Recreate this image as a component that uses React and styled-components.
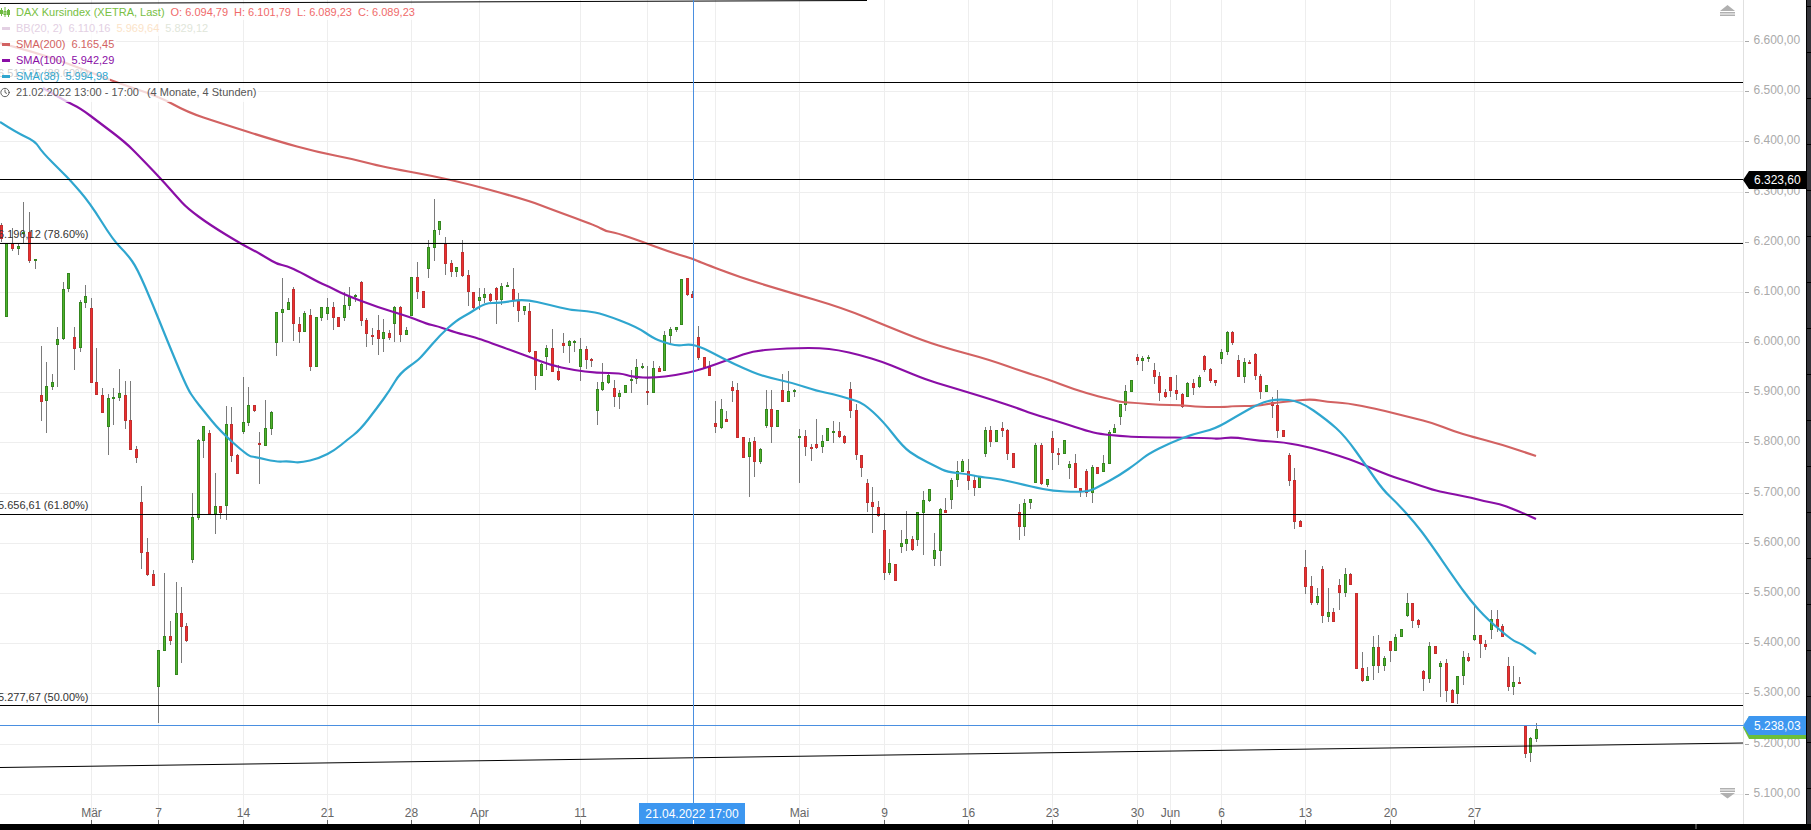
import styled, { createGlobalStyle } from 'styled-components';
import { Clock } from 'lucide-react';

const GlobalStyle = createGlobalStyle`
    html, body {
        margin: 0;
        height: 100%;
        background: #fff;
        overflow: hidden;
        font-family: "Liberation Sans", Arial, sans-serif;
    }
`;

const Page = styled.div`
    width: 1811px;
    height: 830px;
    display: flex;
    flex-direction: column;
    background: #000;
`;
const ChartRow = styled.div`
    display: flex;
    flex: 1;
    min-height: 0;
`;
const ChartArea = styled.div`
    position: relative;
    flex: 1;
    background: #fff;
    overflow: hidden;
`;
const RightRail = styled.div`
    width: 4px;
    border-left: 1px solid #000;
    background: linear-gradient(to bottom, #333338 0, #333338 45px, #000 45px, #000 46px) 0 7px / 100% 46px;
`;
const BottomBar = styled.div`
    display: flex;
    height: 6px;
    padding-left: 1695px;
    background: #000;
`;
const BarNotch = styled.span`
    width: 2px;
    height: 5px;
    background: #444;
`;
const Plot = styled.svg`
    display: block;
    font-family: "Liberation Sans", Arial, sans-serif;
`;

const Legend = styled.div`
    position: absolute;
    top: 4px;
    left: 0;
    display: flex;
    flex-direction: column;
    align-items: flex-start;
    font-size: 11px;
    line-height: 13px;
`;
const LegendRow = styled.div`
    display: flex;
    align-items: center;
    box-sizing: border-box;
    height: 16px;
    column-gap: 6px;
    padding-right: 2px;
    white-space: nowrap;
    color: ${p => p.$color};
    background: rgba(255, 255, 255, 0.75);
`;
/* stops short of the fib line at 6.517 so the line stays solid black */
const ClippedRow = styled(LegendRow)`
    height: 14px;
    padding-top: 2px;
`;
const TimeRow = styled(LegendRow)`
    height: 19px;
    margin-top: 1px;
    column-gap: 8px;
`;
const Marker = styled.span`
    width: 8px;
    height: 3px;
    margin-left: 2px;
    margin-right: 0;
    background: ${p => p.$color};
`;
const IconSlot = styled.span`
    display: flex;
    width: 10px;
`;
const ClockSlot = styled(IconSlot)`
    margin-right: -2px;
`;
const Value = styled.span`
    color: ${p => p.$color || 'inherit'};
`;
const Ohlc = styled.span`
    display: flex;
    column-gap: 6px;
    color: #f06a6a;
`;
const PriceTag = styled.div`
    position: absolute;
    right: 0;
    top: ${p => p.$top}px;
    width: 63px;
    height: ${p => p.$height}px;
    padding-left: 11px;
    box-sizing: border-box;
    display: flex;
    align-items: center;
    font-size: 12px;
    color: #fff;
    background: ${p => p.$bg};
    clip-path: polygon(6px 0, 100% 0, 100% 100%, 6px 100%, 0 50%);
`;
const TimeBox = styled.div`
    position: absolute;
    left: 639px;
    bottom: 0;
    width: 106px;
    height: 21px;
    display: flex;
    align-items: center;
    justify-content: center;
    font-size: 12px;
    color: #fff;
    background: #3d97f0;
    &::after {
        content: '';
        position: absolute;
        left: 54px;
        bottom: 0;
        width: 1px;
        height: 4px;
        background: #fff;
    }
`;

const AXIS_X = 1743.5;
const PLOT_H = 824;

const gridY = [41, 91, 141, 192, 242, 292, 342, 392, 442, 493, 543, 593, 643, 693, 744, 794];
const priceLabels = ['6.600,00', '6.500,00', '6.400,00', '6.300,00', '6.200,00', '6.100,00', '6.000,00', '5.900,00',
    '5.800,00', '5.700,00', '5.600,00', '5.500,00', '5.400,00', '5.300,00', '5.200,00', '5.100,00'];

const timeTicks = [
    [91, 'Mär'], [158, '7'], [243, '14'], [327, '21'], [411, '28'], [479, 'Apr'], [580, '11'], [647, ''], [715, ''],
    [799, 'Mai'], [884, '9'], [968, '16'], [1052, '23'], [1137, '30'], [1170, 'Jun'], [1221, '6'], [1305, '13'],
    [1390, '20'], [1474, '27'],
];

const fibLevels = [[82, '6.517,25 (88.60%)', 77], [179, '', 0], [243, '6.196,12 (78.60%)', 238], [514, '5.656,61 (61.80%)', 509], [705, '5.277,67 (50.00%)', 701]];

const sma200 = '0,43 35,52 80,68 115,82 160,97 187,112 220,123 277,141 317,152 353,159 383,167 450,179 527,200 553,210 597,226 605,231 617,233 643,242 667,251 693,259 700,262 739,277 785,291 843,308 889,327 924,341 953,350 987,359 1027,373 1047,379 1073,389 1100,397 1110,399 1120,402 1137,403 1160,405 1180,405 1200,407 1227,407 1233,406 1257,406 1273,403 1293,401 1312,399 1327,402 1347,403 1377,409 1393,413 1413,418 1433,423 1453,431 1473,437 1500,444 1536,456';
const sma100 = '43,88 67,102 80,108 100,123 125,142 140,157 162,180 177,197 187,208 210,225 243,245 255,251 267,258 277,264 287,266 300,272 320,283 330,287 343,294 377,307 410,317 427,324 437,326 457,333 470,336 480,339 527,356 550,365 573,370 597,373 620,373 633,377 653,378 677,375 700,370 733,358 753,351 777,349 797,348 820,348 838,350 860,355 883,362 900,369 927,380 947,386 967,392 993,400 1020,409 1030,413 1063,423 1087,431 1100,434 1120,436 1137,437 1213,438 1217,439 1233,437 1260,441 1283,442 1313,448 1340,456 1357,462 1390,476 1410,482 1433,490 1447,493 1473,498 1483,501 1500,504 1513,509 1525,514 1536,519';
const sma38 = '0,122 17,133 35,141 42,152 62,172 70,180 90,203 113,240 127,254 137,268 153,305 167,340 187,388 195,400 203,410 220,431 248,456 255,457 277,462 288,461 300,463 320,458 335,450 347,440 360,430 377,408 390,390 400,373 417,361 423,355 440,335 457,320 470,313 485,303 500,303 524,299 550,305 570,310 587,311 603,314 637,327 653,338 663,342 677,346 690,344 700,347 707,350 728,361 743,368 762,376 793,383 817,391 833,394 850,399 863,403 883,421 903,447 917,457 937,467 947,472 967,474 980,477 1000,479 1033,487 1053,491 1077,492 1090,491 1100,486 1120,475 1137,463 1148,454 1170,443 1193,434 1215,429 1237,416 1260,403 1277,399 1300,401 1327,420 1345,436 1367,467 1383,490 1397,503 1415,523 1428,540 1457,582 1470,600 1487,619 1513,641 1520,643 1536,654';

// x, rising (1) or falling (0), wick top, body top, body bottom, wick bottom
const candles = [
    [1, 0, 223, 225, 239, 242], [6, 1, 243, 243, 317, 317], [12, 0, 228, 243, 249, 251], [18, 1, 243, 246, 249, 255], [23, 1, 202, 232, 234, 243], [29, 0, 212, 232, 261, 263], [35, 1, 259, 259, 261, 269],
    [41, 0, 346, 395, 402, 421], [46, 1, 362, 386, 401, 433], [52, 1, 374, 382, 387, 390], [57, 1, 327, 339, 345, 387], [63, 1, 282, 289, 339, 340], [68, 1, 273, 273, 289, 292], [74, 0, 327, 337, 349, 370], [80, 1, 300, 302, 348, 352], [85, 1, 285, 296, 303, 308], [91, 0, 298, 308, 383, 383], [96, 0, 348, 382, 395, 395],
    [102, 0, 388, 395, 413, 413], [108, 1, 394, 398, 427, 455], [113, 1, 388, 397, 399, 425], [119, 1, 369, 393, 398, 401], [125, 0, 381, 395, 421, 429], [130, 0, 381, 420, 450, 450], [136, 0, 446, 449, 458, 463], [141, 0, 486, 502, 553, 569], [147, 0, 538, 552, 575, 576], [153, 0, 570, 574, 586, 586],
    [158, 1, 650, 650, 687, 723], [164, 1, 573, 636, 651, 651], [170, 0, 621, 636, 641, 645], [176, 1, 582, 613, 675, 675], [181, 0, 587, 613, 627, 663], [186, 0, 623, 626, 641, 642],
    [192, 1, 493, 517, 560, 563], [198, 1, 439, 440, 518, 520], [203, 1, 426, 426, 441, 458], [209, 0, 430, 433, 514, 514], [215, 1, 473, 506, 514, 534], [220, 0, 506, 506, 513, 519], [226, 1, 406, 424, 506, 520], [231, 0, 407, 424, 456, 462], [237, 0, 454, 455, 474, 474], [243, 1, 377, 422, 432, 434], [248, 1, 387, 405, 423, 426], [254, 0, 405, 405, 411, 412], [259, 0, 432, 443, 445, 484], [265, 1, 400, 428, 446, 446], [271, 1, 411, 412, 429, 435],
    [276, 1, 312, 312, 343, 356], [282, 1, 278, 309, 313, 342], [288, 1, 298, 302, 310, 310], [293, 0, 287, 289, 324, 341], [299, 0, 317, 324, 332, 343],
    [304, 1, 311, 313, 332, 332], [310, 0, 309, 315, 367, 371], [316, 1, 317, 317, 367, 367], [321, 1, 307, 307, 318, 321], [327, 1, 298, 307, 314, 320], [333, 0, 302, 307, 318, 330], [338, 0, 317, 317, 327, 327], [344, 1, 292, 305, 318, 321], [349, 1, 287, 296, 306, 310], [355, 1, 294, 295, 297, 302], [361, 0, 281, 282, 321, 326], [366, 0, 318, 320, 334, 347], [372, 0, 328, 335, 336, 345], [378, 0, 315, 330, 339, 355], [383, 1, 319, 332, 339, 352], [389, 0, 330, 333, 338, 340], [394, 1, 306, 307, 324, 342], [400, 0, 306, 307, 335, 342], [406, 1, 327, 330, 335, 335], [411, 1, 277, 277, 316, 316], [417, 0, 262, 277, 292, 299], [423, 0, 291, 291, 308, 308], [428, 1, 240, 247, 269, 278], [434, 1, 199, 230, 248, 261], [439, 1, 221, 221, 230, 235], [445, 0, 237, 244, 264, 275], [451, 0, 260, 263, 272, 277], [456, 1, 267, 267, 272, 277], [462, 0, 240, 252, 276, 277], [468, 0, 270, 275, 292, 306], [473, 0, 292, 292, 308, 309], [479, 1, 288, 297, 301, 310], [484, 1, 288, 294, 298, 303], [490, 0, 293, 294, 301, 302], [496, 0, 287, 288, 300, 324], [501, 1, 283, 286, 300, 305], [507, 1, 282, 285, 287, 287], [513, 0, 268, 289, 301, 307], [518, 0, 293, 301, 311, 322], [524, 1, 306, 306, 311, 315], [529, 0, 303, 311, 352, 353], [535, 0, 351, 351, 376, 390], [541, 1, 363, 364, 376, 376], [546, 1, 345, 348, 357, 370], [552, 0, 329, 348, 372, 372], [558, 0, 365, 371, 380, 381], [563, 0, 333, 343, 346, 353], [569, 1, 340, 341, 346, 363], [574, 1, 340, 341, 342, 352], [580, 1, 338, 349, 367, 381], [586, 0, 346, 349, 360, 369], [591, 0, 358, 359, 361, 367], [597, 1, 382, 389, 411, 425], [602, 1, 363, 382, 390, 391], [608, 1, 372, 375, 383, 384], [614, 0, 380, 388, 397, 407], [619, 1, 390, 393, 397, 409], [625, 1, 385, 385, 393, 393], [631, 1, 370, 379, 380, 393], [636, 1, 359, 367, 379, 384], [642, 1, 363, 366, 368, 369], [647, 0, 366, 391, 392, 405], [653, 1, 361, 368, 393, 393], [659, 0, 366, 368, 372, 372], [664, 1, 331, 335, 371, 371], [670, 1, 327, 329, 336, 343], [676, 1, 327, 327, 330, 332], [681, 1, 279, 279, 325, 325], [687, 0, 278, 278, 295, 296], [692, 0, 291, 294, 298, 298], [698, 0, 326, 337, 358, 360],
    [704, 0, 357, 357, 368, 368], [709, 0, 361, 367, 376, 376], [715, 0, 401, 423, 427, 433], [721, 1, 399, 409, 428, 429], [726, 0, 411, 419, 422, 422], [732, 0, 381, 387, 391, 402], [737, 0, 383, 390, 438, 438], [743, 0, 437, 437, 458, 458], [749, 1, 438, 442, 457, 497], [754, 0, 437, 441, 462, 477], [760, 1, 448, 449, 462, 464], [766, 1, 390, 409, 426, 428], [771, 0, 390, 409, 427, 443], [777, 1, 410, 410, 427, 427], [782, 0, 374, 390, 402, 402], [788, 1, 371, 391, 402, 402], [794, 1, 389, 390, 391, 397], [799, 1, 429, 436, 438, 483], [805, 0, 430, 436, 447, 456], [811, 0, 444, 447, 449, 461], [816, 0, 419, 444, 448, 449], [822, 1, 435, 441, 447, 453], [827, 1, 428, 428, 441, 441], [833, 1, 421, 431, 433, 443], [839, 0, 422, 431, 437, 438], [844, 0, 435, 436, 443, 444], [850, 0, 382, 389, 411, 418], [856, 0, 404, 410, 455, 460], [861, 0, 455, 455, 468, 477], [867, 0, 479, 483, 503, 512], [872, 0, 487, 502, 507, 533], [878, 0, 501, 507, 516, 517], [884, 0, 513, 530, 573, 580], [889, 1, 549, 563, 573, 575], [895, 0, 564, 564, 581, 581], [901, 1, 530, 543, 547, 553], [906, 1, 511, 539, 544, 551], [912, 0, 536, 539, 550, 551], [917, 1, 512, 512, 540, 546], [923, 1, 491, 500, 513, 555], [929, 1, 489, 489, 501, 502], [934, 1, 533, 550, 559, 566], [940, 1, 508, 509, 551, 566], [945, 0, 498, 510, 513, 513], [951, 1, 478, 480, 500, 509], [957, 1, 461, 471, 480, 487], [962, 1, 459, 461, 472, 472], [968, 0, 459, 471, 481, 490], [974, 0, 476, 480, 488, 496], [979, 1, 476, 477, 488, 488], [985, 1, 427, 430, 454, 457], [990, 0, 426, 430, 442, 447], [996, 1, 430, 430, 442, 442], [1002, 0, 422, 428, 431, 437], [1007, 0, 429, 430, 454, 460], [1013, 0, 453, 453, 468, 468], [1019, 0, 504, 512, 527, 540], [1024, 1, 499, 503, 527, 536], [1030, 1, 499, 499, 503, 509], [1035, 1, 443, 445, 483, 483], [1041, 0, 443, 445, 484, 485], [1047, 1, 479, 479, 485, 487], [1052, 0, 431, 438, 453, 470], [1058, 0, 448, 453, 454, 465], [1064, 1, 440, 440, 454, 454], [1069, 1, 461, 464, 468, 479], [1075, 0, 454, 463, 488, 488], [1080, 0, 488, 488, 492, 497], [1086, 0, 469, 471, 493, 497], [1092, 1, 465, 467, 493, 503], [1097, 0, 467, 467, 474, 474],
    [1103, 1, 455, 463, 472, 472], [1109, 1, 430, 432, 464, 464], [1114, 1, 424, 428, 433, 433], [1120, 1, 404, 404, 417, 425], [1125, 1, 385, 391, 405, 411], [1131, 1, 380, 380, 392, 392], [1137, 0, 354, 357, 361, 365], [1142, 1, 356, 358, 361, 371], [1148, 1, 355, 357, 359, 362], [1154, 0, 363, 370, 377, 384], [1159, 0, 372, 376, 393, 401], [1165, 0, 389, 392, 397, 398], [1170, 0, 377, 377, 391, 397], [1176, 0, 375, 390, 394, 400], [1182, 0, 393, 394, 407, 408], [1187, 1, 382, 383, 397, 397], [1193, 0, 379, 383, 388, 395], [1199, 1, 375, 377, 387, 388], [1204, 0, 355, 356, 370, 372], [1210, 0, 368, 369, 381, 383], [1215, 0, 380, 380, 383, 386], [1221, 1, 349, 352, 359, 364], [1227, 1, 331, 332, 352, 355], [1232, 0, 331, 332, 343, 345], [1238, 0, 355, 360, 377, 377], [1244, 1, 358, 362, 377, 383], [1249, 0, 360, 362, 363, 364], [1255, 0, 353, 354, 376, 380], [1260, 0, 374, 376, 392, 399], [1266, 1, 385, 385, 392, 392], [1272, 0, 397, 402, 406, 418], [1277, 0, 390, 405, 431, 438], [1283, 0, 430, 430, 437, 437], [1289, 0, 453, 455, 481, 486], [1294, 0, 468, 480, 522, 529], [1300, 0, 520, 521, 527, 527],
    [1305, 0, 550, 567, 587, 594], [1311, 0, 576, 586, 603, 605], [1317, 1, 588, 596, 603, 605], [1322, 0, 566, 569, 616, 623], [1328, 1, 588, 612, 617, 622], [1333, 0, 608, 612, 622, 622], [1339, 0, 579, 585, 593, 610], [1345, 1, 568, 574, 593, 597], [1350, 0, 573, 574, 585, 585], [1356, 0, 593, 593, 669, 669], [1362, 0, 652, 668, 681, 682], [1367, 1, 667, 676, 681, 681], [1373, 1, 636, 647, 666, 680], [1378, 0, 635, 647, 666, 673], [1384, 1, 656, 658, 666, 671], [1390, 0, 641, 641, 651, 662], [1395, 1, 634, 637, 651, 651], [1401, 1, 629, 629, 637, 637], [1407, 1, 593, 603, 616, 617], [1412, 0, 603, 603, 621, 628], [1418, 0, 619, 620, 625, 628], [1423, 0, 670, 671, 679, 691], [1429, 1, 642, 646, 679, 683], [1435, 0, 646, 646, 654, 654], [1440, 1, 661, 663, 667, 697], [1446, 0, 659, 663, 691, 702], [1452, 0, 689, 690, 703, 703], [1457, 1, 676, 676, 694, 704], [1463, 1, 651, 657, 676, 685], [1468, 0, 653, 657, 661, 662], [1474, 1, 605, 635, 640, 641], [1480, 0, 635, 635, 644, 658], [1485, 0, 640, 644, 647, 650], [1491, 1, 610, 619, 630, 639], [1497, 0, 610, 619, 627, 632], [1502, 0, 624, 626, 637, 637], [1508, 0, 657, 666, 687, 691], [1513, 1, 666, 682, 687, 695], [1519, 0, 677, 682, 684, 684], [1525, 0, 726, 726, 754, 758], [1530, 1, 737, 738, 753, 762], [1536, 1, 723, 729, 739, 742],
];

// rounds the corners of a measured line by curving through the midpoints
function smoothPath(points) {
    const pts = points.split(' ').map(p => p.split(',').map(Number));
    let d = `M${pts[0][0]} ${pts[0][1]}`;
    for (let i = 1; i < pts.length - 1; i++) {
        const midX = (pts[i][0] + pts[i + 1][0]) / 2;
        const midY = (pts[i][1] + pts[i + 1][1]) / 2;
        d += ` Q${pts[i][0]} ${pts[i][1]} ${midX} ${midY}`;
    }
    const last = pts[pts.length - 1];
    return `${d} L${last[0]} ${last[1]}`;
}

function Candle({ x, up, wickTop, top, bottom, wickBottom }) {
    const cx = x + 0.5;
    return (
        <g>
            <line x1={cx} x2={cx} y1={wickTop} y2={wickBottom} stroke="#7a7a7a" strokeWidth="1" />
            <rect
                x={cx - 1}
                y={top + 0.5}
                width="2"
                height={Math.max(bottom - top - 1, 1)}
                fill={up ? '#4fb32c' : '#ee2e2e'}
                stroke={up ? '#34861f' : '#c03030'}
                strokeWidth="1"
            />
        </g>
    );
}

function ExpandArrow({ down }) {
    // the two little scale arrows on the price axis
    return (
        <g fill="#b0b0b0" transform={down ? 'translate(0 788)' : 'translate(0 5)'}>
            {down ? (
                <>
                    <rect x="1720" y="0" width="15" height="1.5" />
                    <rect x="1720" y="2.5" width="15" height="1.5" />
                    <polygon points="1720,5 1735,5 1727.5,10.5" />
                </>
            ) : (
                <>
                    <polygon points="1720,6 1735,6 1727.5,0" />
                    <rect x="1720" y="7" width="15" height="1.5" />
                    <rect x="1720" y="9.5" width="15" height="1.5" />
                </>
            )}
        </g>
    );
}

function CandleIcon() {
    return (
        <svg width="10" height="12" viewBox="0 0 10 12">
            <g stroke="#6cb93f" strokeWidth="1" fill="none">
                <path d="M1.5 2V10M5 1V11M8.5 3V11" />
                <rect x="0.5" y="4.5" width="2" height="3" />
                <rect x="4" y="5.5" width="2" height="3" />
                <rect x="7.5" y="4.5" width="2" height="4" />
            </g>
        </svg>
    );
}

export default function App() {
    return (
        <>
            <GlobalStyle />
            <Page>
                <ChartRow>
                    <ChartArea>
                        <Plot width="1806" height={PLOT_H}>
                            {gridY.map(y => (
                                <line key={y} x1="0" x2={AXIS_X} y1={y + 0.5} y2={y + 0.5} stroke="#eeeeee" />
                            ))}
                            {timeTicks.map(([x]) => (
                                <line key={x} x1={x + 0.5} x2={x + 0.5} y1="0" y2={PLOT_H} stroke="#eeeeee" />
                            ))}
                            {candles.map(c => (
                                <Candle key={c[0]} x={c[0]} up={c[1]} wickTop={c[2]} top={c[3]} bottom={c[4]} wickBottom={c[5]} />
                            ))}
                            <path d={smoothPath(sma200)} fill="none" stroke="#d26262" strokeWidth="2.2" />
                            <path d={smoothPath(sma100)} fill="none" stroke="#8a0ea6" strokeWidth="2.2" />
                            <path d={smoothPath(sma38)} fill="none" stroke="#2fa6cf" strokeWidth="2.2" />

                            {fibLevels.map(([y, label, textY]) => (
                                <g key={y}>
                                    <line x1="0" x2={AXIS_X} y1={y + 0.5} y2={y + 0.5} stroke="#000" />
                                    {label && <text x="-2" y={textY} fontSize="11" fill="#333">{label}</text>}
                                </g>
                            ))}
                            <line x1="0" y1="3.5" x2="867" y2="0.5" stroke="#000" />
                            <line x1="0" y1="767.5" x2={AXIS_X} y2="743" stroke="#000" />

                            <line x1="0" x2={AXIS_X} y1="725.5" y2="725.5" stroke="#4a8fe0" />
                            <line x1="693.5" x2="693.5" y1="0" y2="803" stroke="#4a8fe0" />

                            <line x1={AXIS_X} x2={AXIS_X} y1="0" y2={PLOT_H} stroke="#e0e0e0" />
                            {gridY.map((y, i) => (
                                <g key={y}>
                                    <line x1="1745" x2="1749" y1={y + 0.5} y2={y + 0.5} stroke="#aaa" />
                                    <text x="1753.5" y={y + 3} fontSize="12" fill="#aaa">{priceLabels[i]}</text>
                                </g>
                            ))}
                            <ExpandArrow />
                            <ExpandArrow down />

                            {timeTicks.map(([x, label]) => (
                                <g key={x}>
                                    <line x1={x + 0.5} x2={x + 0.5} y1="820" y2={PLOT_H} stroke="#666" />
                                    {label && <text x={x + 0.5} y="817" fontSize="12" fill="#666" textAnchor="middle">{label}</text>}
                                </g>
                            ))}
                        </Plot>

                        <Legend>
                            <LegendRow $color="#78c043">
                                <IconSlot><CandleIcon /></IconSlot>
                                <span>DAX Kursindex (XETRA, Last)</span>
                                <Ohlc>
                                    <span>O: 6.094,79</span>
                                    <span>H: 6.101,79</span>
                                    <span>L: 6.089,23</span>
                                    <span>C: 6.089,23</span>
                                </Ohlc>
                            </LegendRow>
                            <LegendRow $color="#e3d0e3">
                                <Marker $color="#e3d0e3" />
                                <span>BB(20, 2)</span>
                                <Value>6.110,16</Value>
                                <Value $color="#fbe3c8">5.969,64</Value>
                                <Value $color="#dfe6da">5.829,12</Value>
                            </LegendRow>
                            <LegendRow $color="#d26262">
                                <Marker $color="#d26262" />
                                <span>SMA(200)</span>
                                <Value>6.165,45</Value>
                            </LegendRow>
                            <LegendRow $color="#8a0ea6">
                                <Marker $color="#8a0ea6" />
                                <span>SMA(100)</span>
                                <Value>5.942,29</Value>
                            </LegendRow>
                            <ClippedRow $color="#2fa6cf">
                                <Marker $color="#2fa6cf" />
                                <span>SMA(38)</span>
                                <Value>5.994,98</Value>
                            </ClippedRow>
                            <TimeRow $color="#555">
                                <ClockSlot><Clock size={13} strokeWidth={2} color="#444" /></ClockSlot>
                                <span>21.02.2022 13:00 - 17:00</span>
                                <span>(4 Monate, 4 Stunden)</span>
                            </TimeRow>
                        </Legend>

                        <PriceTag $top={171} $height={18} $bg="#000">6.323,60</PriceTag>
                        <PriceTag $top={716} $height={23} $bg="#6cbf3a" />
                        <PriceTag $top={716} $height={19} $bg="#3d97f0">5.238,03</PriceTag>
                        <TimeBox>21.04.2022 17:00</TimeBox>
                    </ChartArea>
                    <RightRail />
                </ChartRow>
                <BottomBar><BarNotch /></BottomBar>
            </Page>
        </>
    );
}
